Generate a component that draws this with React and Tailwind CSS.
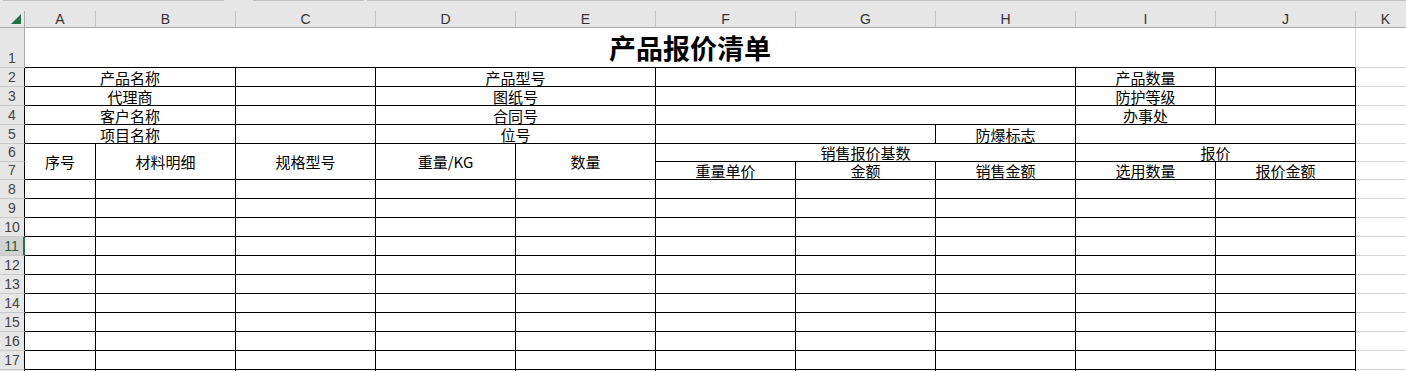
import clsx from 'clsx'

const LETTERS = ['A', 'B', 'C', 'D', 'E', 'F', 'G', 'H', 'I', 'J', 'K']

const SPAN = { 1: '', 2: 'col-span-2', 3: 'col-span-3' }

// rows 2-5 of the sheet
const infoRows = [
  [{ s: 2, t: '产品名称' }, {}, { s: 2, t: '产品型号' }, { s: 3 }, { t: '产品数量' }, {}],
  [{ s: 2, t: '代理商' }, {}, { s: 2, t: '图纸号' }, { s: 3 }, { t: '防护等级' }, {}],
  [{ s: 2, t: '客户名称' }, {}, { s: 2, t: '合同号' }, { s: 3 }, { t: '办事处' }, {}],
  [{ s: 2, t: '项目名称' }, {}, { s: 2, t: '位号' }, { s: 2 }, { t: '防爆标志' }, { s: 2 }],
]

const Cell = ({ className, children }) => (
  <div
    className={clsx(
      'flex items-center justify-center whitespace-nowrap border-r border-b border-black text-[15px] leading-none text-black',
      className
    )}
  >
    {children}
  </div>
)

const RowHead = ({ n, selected, first }) => (
  <div
    className={clsx(
      "flex items-end justify-center pb-[2px] border-b border-b-[#c8c8c8] font-['Liberation_Sans',sans-serif] text-[14px] leading-none",
      selected
        ? 'bg-[#d2d2d2] text-[#1f5e3a] border-r-2 border-r-[#217346]'
        : 'bg-[#e6e6e6] text-[#444]',
      !selected && (first ? 'border-r border-r-[#ababab]' : 'border-r border-r-black')
    )}
  >
    {n}
  </div>
)

const Blank = () => <div className="border-r border-b border-[#d4d4d4] bg-white" />

const App = () => {
  const dataRows = Array.from({ length: 11 }, (_, i) => i + 8)

  return (
    <div className="w-[1406px] h-[371px] overflow-hidden bg-white font-['Noto_Sans_CJK_SC',sans-serif]">
      {/* strip above the column letters */}
      <div className="h-[11px] bg-[#e6e6e6] flex items-start">
        <div className="ml-[3px] w-[221px] h-px bg-[#c2c2c2]" />
        <div className="ml-[29px] w-[111px] h-px bg-[#c2c2c2]" />
        <div className="ml-[3px] flex-1 h-px bg-[#c2c2c2]" />
      </div>

      <div className="grid w-[1416px] grid-cols-[25px_71px_repeat(9,140px)_60px] grid-rows-[17px_40px_19px_19px_19px_19px_18px_18px_repeat(11,19px)]">
        {/* column letters */}
        <div className="flex items-end justify-end pr-[3px] pb-[3px] bg-[#e6e6e6] border-r border-b border-r-[#ababab] border-b-[#ababab]">
          <svg width="10" height="10" viewBox="0 0 10 10">
            <polygon points="10,0 10,10 0,10" fill="#217346" />
          </svg>
        </div>
        {LETTERS.map((l) => (
          <div
            key={l}
            className="flex items-center justify-center bg-[#e6e6e6] border-r border-r-[#c6c6c6] border-b border-b-[#ababab] font-['Liberation_Sans',sans-serif] text-[14px] leading-none text-[#333]"
          >
            {l}
          </div>
        ))}

        {/* row 1: title */}
        <RowHead n={1} first />
        <div className="col-span-10 flex items-center justify-center border-r border-r-[#d4d4d4] border-b border-b-black text-[27px] font-bold leading-none text-black">
          产品报价清单
        </div>
        <Blank />

        {/* rows 2-5 */}
        {infoRows.map((cells, i) => (
          <div key={i} className="contents">
            <RowHead n={i + 2} />
            {cells.map((c, j) => (
              <Cell key={j} className={SPAN[c.s || 1]}>
                {c.t}
              </Cell>
            ))}
            <Blank />
          </div>
        ))}

        {/* rows 6-7: column headings */}
        <RowHead n={6} />
        <Cell className="row-span-2">序号</Cell>
        <Cell className="row-span-2">材料明细</Cell>
        <Cell className="row-span-2">规格型号</Cell>
        <Cell className="row-span-2">重量/KG</Cell>
        <Cell className="row-span-2">数量</Cell>
        <Cell className="col-span-3">销售报价基数</Cell>
        <Cell className="col-span-2">报价</Cell>
        <Blank />

        <RowHead n={7} />
        <Cell>重量单价</Cell>
        <Cell>金额</Cell>
        <Cell>销售金额</Cell>
        <Cell>选用数量</Cell>
        <Cell>报价金额</Cell>
        <Blank />

        {/* rows 8-18: empty lines, 18 only peeks in at the bottom edge */}
        {dataRows.map((n) => (
          <div key={n} className="contents">
            <RowHead n={n < 18 ? n : null} selected={n === 11} />
            {LETTERS.slice(0, 10).map((l) => (
              <Cell key={l} />
            ))}
            <Blank />
          </div>
        ))}
      </div>
    </div>
  )
}

export default App
